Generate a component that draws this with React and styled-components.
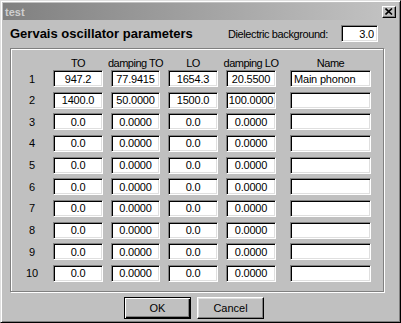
import styled, { createGlobalStyle } from 'styled-components';

const GlobalStyle = createGlobalStyle`
  body {
    margin: 0;
    background: #c0c0c0;
    font-family: 'Liberation Sans', Arial, sans-serif;
  }
`;

const rows = [
  ['947.2', '77.9415', '1654.3', '20.5500', 'Main phonon'],
  ['1400.0', '50.0000', '1500.0', '100.0000', ''],
  ...Array.from({ length: 8 }, () => ['0.0', '0.0000', '0.0', '0.0000', ''])
];

const headers = ['TO', 'damping TO', 'LO', 'damping LO'];

const App = () => {
  return (
    <>
      <GlobalStyle />
      <Window>
        <TitleBar>
          <TitleText>test</TitleText>
          <CloseButton>
            <svg width="8" height="7" viewBox="0 0 8 7">
              <path d="M0.5 0.5 L7 6.5 M7 0.5 L0.5 6.5" stroke="#000" strokeWidth="1.6" />
            </svg>
          </CloseButton>
        </TitleBar>
        <Client>
          <HeaderRow>
            <Heading>Gervais oscillator parameters</Heading>
            <Dielectric>
              <Label>Dielectric background:</Label>
              <Field $align="right" $width={37} defaultValue="3.0" />
            </Dielectric>
          </HeaderRow>
          <GroupBox>
            <Grid>
              <span />
              {headers.map((h) => (
                <ColumnLabel key={h}>{h}</ColumnLabel>
              ))}
              <ColumnLabel $name>Name</ColumnLabel>
            </Grid>
            <Rows>
              {rows.map((r, i) => (
                <Grid key={i}>
                  <RowNumber>{i + 1}</RowNumber>
                  {r.slice(0, 4).map((v, j) => (
                    <Field key={j} $align="center" defaultValue={v} />
                  ))}
                  <Field $align="left" $name defaultValue={r[4]} />
                </Grid>
              ))}
            </Rows>
          </GroupBox>
          <ButtonRow>
            <Button $default>OK</Button>
            <Button>Cancel</Button>
          </ButtonRow>
        </Client>
      </Window>
    </>
  );
};

const Window = styled.div`
  width: 401px;
  height: 323px;
  box-sizing: border-box;
  background: #c0c0c0;
  border: 1px solid;
  border-color: #dfdfdf #000 #000 #dfdfdf;
  box-shadow: inset 1px 1px #fff, inset -1px -1px #808080;
  padding: 2px;
  display: flex;
  flex-direction: column;
`;

const TitleBar = styled.div`
  height: 17px;
  flex-shrink: 0;
  display: flex;
  align-items: center;
  justify-content: space-between;
  padding: 0 2px;
  background: linear-gradient(to right, #808080, #c4c4c4);
`;

const TitleText = styled.span`
  font-size: 11px;
  font-weight: bold;
  color: #cfcfcf;
`;

const CloseButton = styled.div`
  width: 14px;
  height: 12px;
  box-sizing: border-box;
  display: flex;
  align-items: center;
  justify-content: center;
  background: #c0c0c0;
  border: 1px solid;
  border-color: #fff #000 #000 #fff;
  box-shadow: inset -1px -1px #808080;
`;

const Client = styled.div`
  flex: 1;
  display: flex;
  flex-direction: column;
  padding: 5px 14px 0 7px;
`;

const HeaderRow = styled.div`
  height: 17px;
  display: flex;
  align-items: center;
  justify-content: space-between;
`;

const Heading = styled.h1`
  margin: 0;
  font-size: 13px;
  line-height: 15px;
  font-weight: bold;
  color: #000;
`;

const Dielectric = styled.div`
  display: flex;
  align-items: center;
  gap: 13px;
  margin-right: 6px;
`;

const Label = styled.span`
  font-size: 11px;
  letter-spacing: -0.4px;
  white-space: nowrap;
  color: #000;
`;

const GroupBox = styled.div`
  margin-top: 6px;
  height: 244px;
  box-sizing: border-box;
  border: 1px solid #808080;
  box-shadow: 1px 1px 0 #fff, inset 1px 1px 0 #fff;
  padding: 7px 0 9px 8px;
  display: flex;
  flex-direction: column;
`;

const Grid = styled.div`
  display: grid;
  grid-template-columns: 26px 50px 49px 50px 50px 87px;
  column-gap: 8px;
  align-items: center;
`;

const Rows = styled.div`
  display: flex;
  flex-direction: column;
  gap: 4.67px;
`;

const ColumnLabel = styled.span`
  display: flex;
  justify-content: center;
  height: 14px;
  line-height: 14px;
  font-size: 11px;
  letter-spacing: -0.5px;
  white-space: nowrap;
  color: #000;
  ${(p) => p.$name && 'justify-self: end; width: 81px;'}
`;

const RowNumber = styled.span`
  font-size: 11px;
  text-align: center;
  color: #000;
`;

const Field = styled.input`
  width: ${(p) => (p.$name ? '81px' : p.$width ? `${p.$width}px` : '100%')};
  height: 17px;
  box-sizing: border-box;
  margin: 0;
  padding: 0 ${(p) => (p.$align === 'center' ? '0' : '3px')};
  ${(p) => p.$name && 'justify-self: end;'}
  background: #fff;
  border: 1px solid;
  border-color: #808080 #fff #fff #808080;
  box-shadow: inset 1px 1px #000, inset -1px -1px #dfdfdf;
  outline: none;
  font-family: 'Liberation Sans', Arial, sans-serif;
  font-size: 11px;
  letter-spacing: -0.2px;
  color: #000;
  text-align: ${(p) => p.$align};
`;

const ButtonRow = styled.div`
  display: flex;
  gap: 6px;
  margin-top: 5px;
  padding-left: 114px;
`;

const Button = styled.button`
  width: 67px;
  height: 22px;
  box-sizing: border-box;
  margin: 0;
  padding: 0;
  background: #c0c0c0;
  font-family: 'Liberation Sans', Arial, sans-serif;
  font-size: 11px;
  color: #000;
  border: 1px solid;
  border-color: ${(p) => (p.$default ? '#000' : '#fff #000 #000 #fff')};
  box-shadow: ${(p) =>
    p.$default
      ? 'inset 1px 1px #fff, inset -1px -1px #000, inset -2px -2px #808080'
      : 'inset -1px -1px #808080, inset 1px 1px #dfdfdf'};
`;

export default App;
